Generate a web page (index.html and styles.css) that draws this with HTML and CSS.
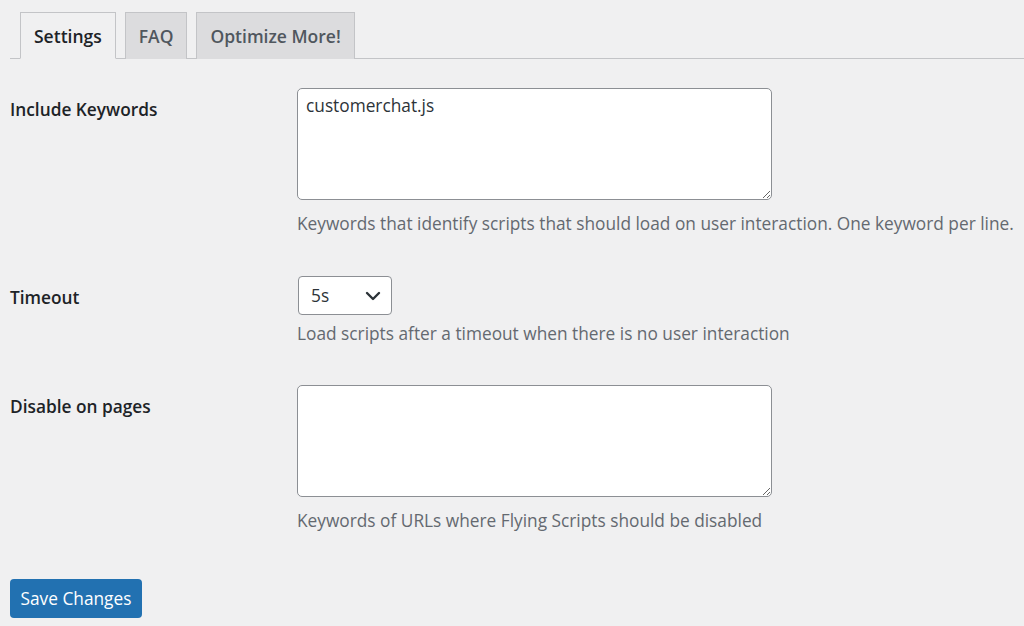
FILE: index.html
```html
<!DOCTYPE html>
<html>
<head>
<meta charset="utf-8">
<link rel="stylesheet" href="styles.css">
</head>
<body>
<div class="wrap">
  <nav class="tabs">
    <a class="tab active">Settings</a>
    <a class="tab">FAQ</a>
    <a class="tab">Optimize More!</a>
  </nav>
  <form class="form">
    <div class="row">
      <div class="label">Include Keywords</div>
      <div class="field">
        <textarea class="area">customerchat.js</textarea>
        <p class="desc">Keywords that identify scripts that should load on user interaction. One keyword per line.</p>
      </div>
    </div>
    <div class="row r2">
      <div class="label">Timeout</div>
      <div class="field">
        <div class="select">
          <span>5s</span>
          <svg class="chev" width="16" height="10" viewBox="0 0 16 10"><path d="M2 2 L8 8 L14 2" fill="none" stroke="#2c3338" stroke-width="2.4" stroke-linecap="round" stroke-linejoin="round"/></svg>
        </div>
        <p class="desc d2">Load scripts after a timeout when there is no user interaction</p>
      </div>
    </div>
    <div class="row">
      <div class="label">Disable on pages</div>
      <div class="field">
        <textarea class="area"></textarea>
        <p class="desc">Keywords of URLs where Flying Scripts should be disabled</p>
      </div>
    </div>
    <button type="button" class="btn">Save Changes</button>
  </form>
</div>
</body>
</html>
```
FILE: styles.css
```css
html, body {
  margin: 0;
  padding: 0;
  background: #f0f0f1;
}
body {
  font-family: "Open Sans", "Noto Sans", sans-serif;
  font-size: 17.3px;
  color: #1d2327;
  height: 626px;
  overflow: hidden;
}
.wrap {
  padding-left: 10px;
}
.tabs {
  display: flex;
  gap: 9px;
  padding: 12px 0 0 10px;
  border-bottom: 1px solid #c3c4c7;
  height: 46px;
  box-sizing: content-box;
}
.tab {
  display: block;
  line-height: 46px;
  padding: 0 13px;
  border: 1px solid #c3c4c7;
  border-bottom: none;
  background: #dcdcde;
  color: #50575e;
  font-weight: 600;
  font-size: 17.5px;
  box-sizing: border-box;
  margin-bottom: -1px;
  height: 47px;
}
.tab.active {
  background: #f0f0f1;
  color: #1d2327;
  border-bottom: 1px solid #f0f0f1;
}
.form {
  margin-top: 9px;
}
.row {
  display: grid;
  grid-template-columns: 287px 1fr;
  padding: 20px 0;
}
.row.r2 {
  padding-bottom: 19px;
}
.label {
  font-weight: 600;
  line-height: 24px;
  padding-top: 10px;
}
.field {
  display: flex;
  flex-direction: column;
  align-items: flex-start;
}
.area {
  display: block;
  width: 475px;
  height: 112px;
  box-sizing: border-box;
  border: 1px solid #8c8f94;
  border-radius: 5px;
  background: #fff;
  font-family: inherit;
  font-size: 17.3px;
  color: #2c3338;
  padding: 5px 8px;
  line-height: 24px;
  margin: 0;
  resize: vertical;
}
.desc {
  margin: 12px 0 0;
  line-height: 24px;
  color: #646970;
}
.desc.d2 {
  margin-top: 7px;
}
.select {
  display: flex;
  align-items: center;
  justify-content: space-between;
  width: 94px;
  height: 39px;
  box-sizing: border-box;
  border: 1px solid #8c8f94;
  border-radius: 4px;
  background: #fff;
  padding: 0 10px 0 12px;
  margin-left: 1px;
  color: #2c3338;
}
.chev {
  display: block;
}
.btn {
  margin-top: 26px;
  width: 132px;
  height: 39px;
  border: none;
  border-radius: 4px;
  background: #2271b1;
  color: #fff;
  font-family: inherit;
  font-size: 17.3px;
  padding: 0;
  cursor: pointer;
}
```
